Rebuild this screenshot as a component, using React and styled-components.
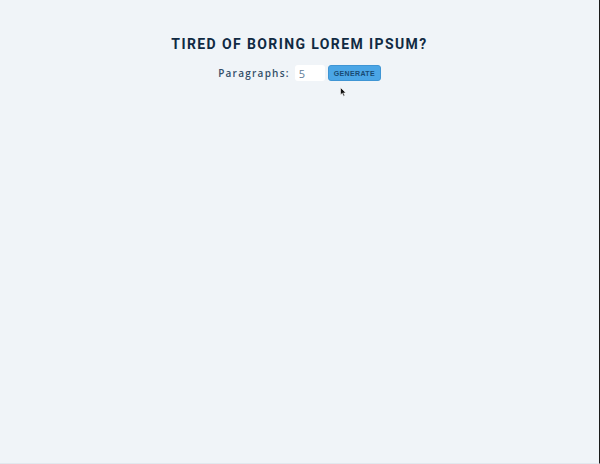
import React from "react";
import styled, { createGlobalStyle } from "styled-components";

const GlobalStyle = createGlobalStyle`
  html, body {
    margin: 0;
    padding: 0;
    background: #f0f4f8;
  }
  * {
    box-sizing: border-box;
  }
`;

const Page = styled.main`
  position: relative;
  height: 464px;
  width: 600px;
  border-right: 1px solid #1a1a1a;
  border-bottom: 1px solid #e2e8ee;
  background: #f0f4f8;
  padding-top: 36px;
  display: flex;
  flex-direction: column;
  align-items: center;
`;

const Title = styled.h3`
  margin: 0 0 12px;
  font-family: Roboto, "Liberation Sans", sans-serif;
  font-weight: 700;
  font-size: 14px;
  line-height: 17px;
  letter-spacing: 1.4px;
  color: #102a43;
  text-transform: uppercase;
`;

const Form = styled.form`
  display: flex;
  align-items: center;
  gap: 3px;
`;

const Label = styled.label`
  font-family: "Open Sans", "Liberation Sans", sans-serif;
  font-size: 10px;
  font-weight: 600;
  letter-spacing: 1.25px;
  color: #334e68;
  margin-right: 2px;
`;

const Input = styled.input`
  width: 30px;
  height: 16px;
  border: none;
  border-radius: 3px;
  background: #ffffff;
  padding: 0 0 0 4px;
  font-family: "Open Sans", "Liberation Sans", sans-serif;
  font-size: 11px;
  color: #627d98;
  outline: none;
`;

const Button = styled.button`
  width: 53px;
  height: 16px;
  padding: 0;
  border: 1px solid #3f95d4;
  border-radius: 3px;
  background: #4ba6e6;
  color: #184a72;
  font-family: "Liberation Sans", Arial, sans-serif;
  font-size: 7px;
  font-weight: 700;
  letter-spacing: 0.35px;
  text-transform: uppercase;
  cursor: pointer;
`;

const Cursor = styled.svg`
  position: absolute;
  left: 340px;
  top: 87px;
`;

export default function App() {
  return (
    <>
      <GlobalStyle />
      <Page>
        <Title>tired of boring lorem ipsum?</Title>
        <Form onSubmit={(e) => e.preventDefault()}>
          <Label htmlFor="amount">Paragraphs:</Label>
          <Input type="text" id="amount" defaultValue="5" />
          <Button type="submit">generate</Button>
        </Form>
        <Cursor width="7" height="10" viewBox="0 0 7 10">
          <path d="M0.5 0.5 L0.5 8 L2.3 6.3 L3.6 9.3 L4.8 8.8 L3.6 5.9 L6 5.9 Z" fill="#111" stroke="#fff" strokeWidth="0.6" />
        </Cursor>
      </Page>
    </>
  );
}
